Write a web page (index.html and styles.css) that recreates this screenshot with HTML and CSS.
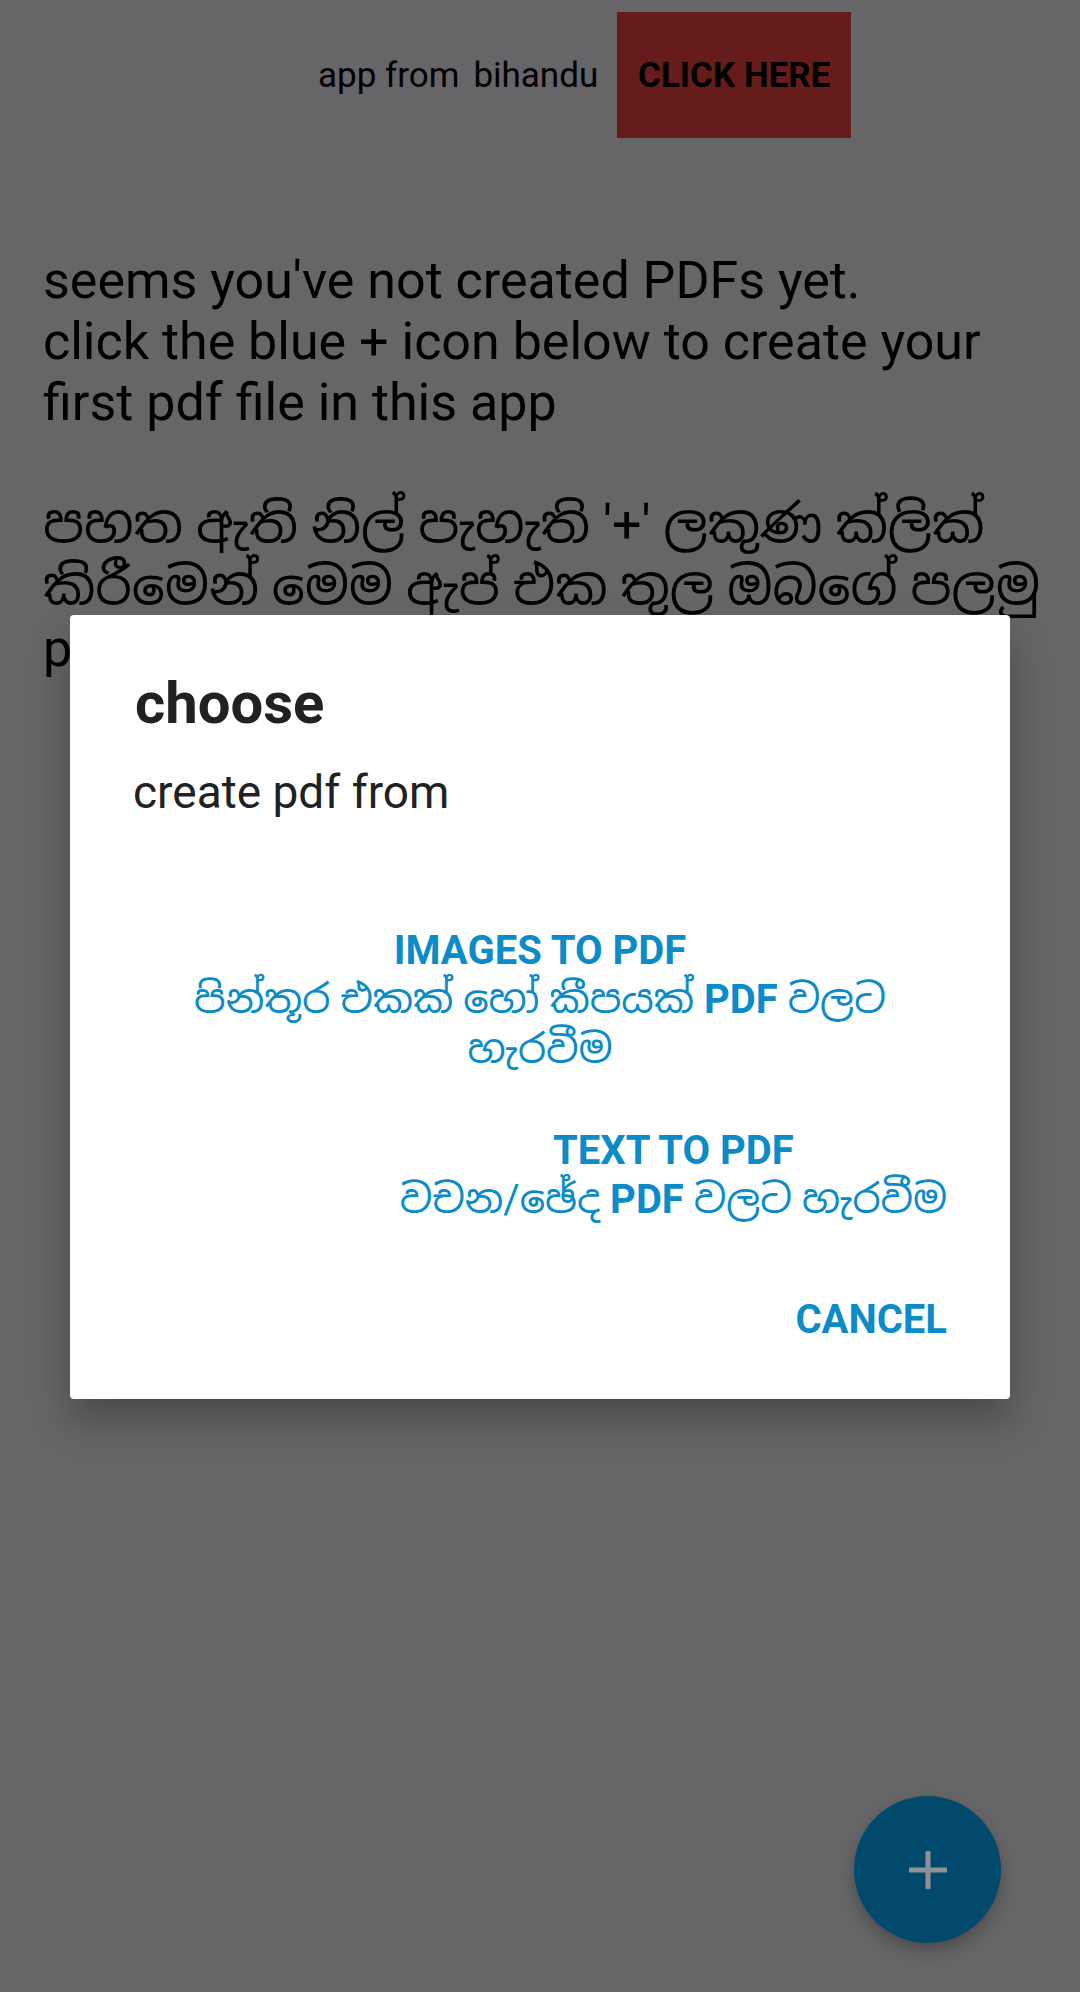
FILE: index.html
```html
<!DOCTYPE html>
<html lang="en">
<head>
<meta charset="utf-8">
<title>PDF maker</title>
<link rel="stylesheet" href="styles.css">
</head>
<body>
<div class="screen">
  <header class="topbar">
    <span class="credit">app from</span><span class="credit credit-name">bihandu</span>
    <a class="click-btn">CLICK HERE</a>
  </header>

  <main class="empty">
    <p class="msg-en">seems you've not created PDFs yet.<br>click the blue + icon below to create your first pdf file in this app</p>
    <p class="msg-si"><span class="si-line">පහත ඇති නිල් පැහැති '+' ලකුණ ක්ලික්</span><span class="si-line">කිරීමෙන් මෙම ඇප් එක තුල ඔබගේ පලමු</span><span class="si-line">pdf ගොනුව සාදන්න</span></p>
  </main>

  <button class="fab" aria-label="create">
    <svg class="fab-icon" viewBox="0 0 40 40" width="40" height="40">
      <rect x="17.5" y="1" width="5" height="38" fill="currentColor"/>
      <rect x="1" y="17.5" width="38" height="5" fill="currentColor"/>
    </svg>
  </button>

  <div class="dialog">
    <h2 class="dlg-title">choose</h2>
    <p class="dlg-msg">create pdf from</p>
    <div class="dlg-actions">
      <button class="dlg-btn dlg-btn-wide">
        <span class="btn-en">IMAGES TO PDF</span>
        <span class="btn-si">පින්තූර එකක් හෝ කීපයක් <b>PDF</b> වලට</span>
        <span class="btn-si">හැරවීම</span>
      </button>
      <button class="dlg-btn dlg-btn-text">
        <span class="btn-en">TEXT TO PDF</span>
        <span class="btn-si">වචන/ඡේද <b>PDF</b> වලට හැරවීම</span>
      </button>
      <button class="dlg-btn dlg-btn-cancel">
        <span class="btn-en">CANCEL</span>
      </button>
    </div>
  </div>
</div>
</body>
</html>
```

FILE: styles.css
```css
html, body {
  margin: 0;
  padding: 0;
}

body {
  background: #666568;
  font-family: Roboto, "Noto Sans Sinhala", "Noto Sans", sans-serif;
  color: #000;
}

.screen {
  position: relative;
  width: 1080px;
  height: 1992px;
  overflow: hidden;
  background: #666568;
}

/* top credit bar */
.topbar {
  display: flex;
  align-items: center;
  padding: 12px 0 0 318px;
}

.credit {
  font-size: 35px;
  color: #000;
}

.credit-name {
  margin-left: 14px;
}

.click-btn {
  display: flex;
  align-items: center;
  justify-content: center;
  width: 234px;
  height: 126px;
  margin-left: 19px;
  background: #661c1a;
  font-size: 35px;
  font-weight: 700;
  color: #000;
}

/* empty state text */
.empty {
  padding: 0 43px;
  margin-top: 112px;
}

.msg-en {
  margin: 0;
  font-size: 52px;
  line-height: 61px;
}

.msg-si {
  margin: 61px 0 0;
  font-size: 52px;
  line-height: 62px;
}

.si-line {
  display: block;
  white-space: nowrap;
}

/* floating action button */
.fab {
  position: absolute;
  right: 79px;
  bottom: 49px;
  width: 147px;
  height: 147px;
  border: 0;
  border-radius: 50%;
  background: #014a6d;
  color: #8e9296;
  display: flex;
  align-items: center;
  justify-content: center;
  padding: 0;
  box-shadow: 0 8px 16px rgba(0, 0, 0, 0.25);
}

.fab-icon {
  display: block;
}

/* dialog */
.dialog {
  position: absolute;
  left: 70px;
  top: 615px;
  width: 940px;
  background: #fff;
  border-radius: 4px;
  box-shadow: 0 22px 40px rgba(0, 0, 0, 0.28);
  padding-bottom: 55px;
}

.dlg-title {
  margin: 0;
  padding: 54px 65px 0;
  font-size: 58px;
  line-height: 68px;
  font-weight: 700;
  color: #212121;
}

.dlg-msg {
  margin: 28px 0 0;
  padding: 0 63px;
  font-size: 46px;
  line-height: 55px;
  color: #212121;
}

.dlg-actions {
  display: flex;
  flex-direction: column;
  align-items: flex-end;
  padding: 0 42px;
  margin-top: 107px;
}

.dlg-btn {
  display: flex;
  flex-direction: column;
  align-items: center;
  border: 0;
  background: none;
  padding: 0 21px;
  font-family: Roboto, "Noto Sans Sinhala", "Noto Sans", sans-serif;
  color: #0b8bc7;
  text-align: center;
}

.dlg-btn-wide {
  align-self: stretch;
}

.dlg-btn-text {
  margin-top: 52px;
}

.dlg-btn-cancel {
  margin-top: 71px;
}

.btn-en {
  display: block;
  font-size: 40px;
  line-height: 48px;
  font-weight: 700;
}

.btn-si {
  display: block;
  font-size: 40px;
  line-height: 50px;
  font-weight: 400;
  white-space: nowrap;
}

.btn-si b {
  font-family: Roboto, sans-serif;
  font-weight: 700;
}
```
